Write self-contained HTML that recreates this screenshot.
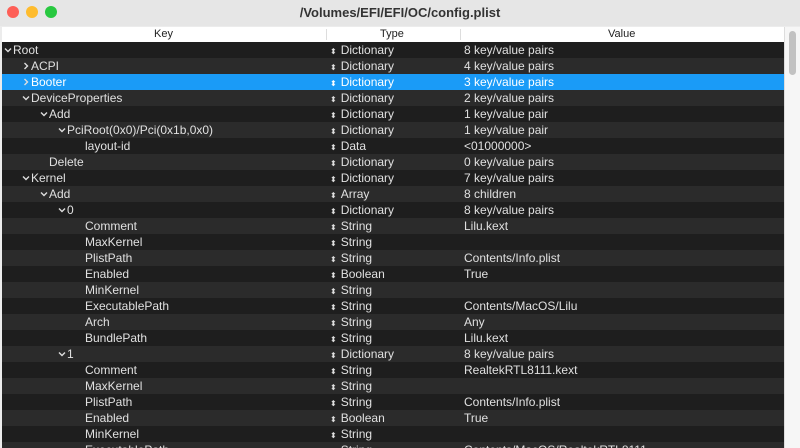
<!DOCTYPE html>
<html><head><style>
html,body{margin:0;width:800px;height:448px;overflow:hidden}
body{background:#ececec;font-family:"Liberation Sans",sans-serif;font-size:12px;position:relative}
.tb{position:absolute;left:0;top:0;width:800px;height:26px;background:#e6e6e6;text-align:center;line-height:25px;font-weight:bold;font-size:13px;color:#333}
.dot{position:absolute;top:6px;width:12px;height:12px;border-radius:50%}
.hdr{position:absolute;left:2px;top:27px;width:782px;height:15px;background:#fff;border-bottom:1px solid #ccc;font-size:11px;color:#222;line-height:15px}
.hdr span{position:absolute;top:0}
.sep{position:absolute;top:2px;width:1px;height:11px;background:#ddd}
.rows{position:absolute;left:2px;top:42px;width:782px;height:406px;overflow:hidden}
.r{height:16px;line-height:16px;position:relative;color:#e0e0e0;white-space:nowrap}
.r:nth-child(odd){background:#1e1e1e}.r:nth-child(even){background:#2b2b2b}
.r.sel{background:#1a9bf7;color:#fff}
.k{position:absolute}
.ar{position:absolute;top:4px;width:8px;height:8px}
.t{position:absolute;left:328px}
.t:before{content:"⬍";font-size:8px;margin-right:4px}
.v{position:absolute;left:462px}
.sb{position:absolute;left:784px;top:27px;width:16px;height:421px;background:#f6f6f6;border-left:1px solid #ddd}
.th{position:absolute;left:4px;top:4px;width:7px;height:44px;border-radius:4px;background:#c2c2c2}
</style></head><body>
<svg width="0" height="0" style="position:absolute"><defs>
<symbol id="d" viewBox="0 0 8 8"><path d="M1 2.5L4 5.5L7 2.5" fill="none" stroke="#ddd" stroke-width="1.4"/></symbol>
<symbol id="c" viewBox="0 0 8 8"><path d="M2.5 1L5.5 4L2.5 7" fill="none" stroke="#ddd" stroke-width="1.4"/></symbol>
</defs></svg>
<div class="tb">/Volumes/EFI/EFI/OC/config.plist
<div class="dot" style="left:7px;background:#fe5f57"></div><div class="dot" style="left:26px;background:#febc2e"></div><div class="dot" style="left:45px;background:#28c840"></div></div>
<div class="hdr"><span style="left:152px">Key</span><div class="sep" style="left:324px"></div><span style="left:378px">Type</span><div class="sep" style="left:458px"></div><span style="left:606px">Value</span></div>
<div class="rows">
<div class="r"><svg class="ar" style="left:2px"><use href="#d"/></svg><span class="k" style="left:11px">Root</span><span class="t">Dictionary</span><span class="v">8 key/value pairs</span></div>
<div class="r"><svg class="ar" style="left:20px"><use href="#c"/></svg><span class="k" style="left:29px">ACPI</span><span class="t">Dictionary</span><span class="v">4 key/value pairs</span></div>
<div class="r sel"><svg class="ar" style="left:20px"><use href="#c"/></svg><span class="k" style="left:29px">Booter</span><span class="t">Dictionary</span><span class="v">3 key/value pairs</span></div>
<div class="r"><svg class="ar" style="left:20px"><use href="#d"/></svg><span class="k" style="left:29px">DeviceProperties</span><span class="t">Dictionary</span><span class="v">2 key/value pairs</span></div>
<div class="r"><svg class="ar" style="left:38px"><use href="#d"/></svg><span class="k" style="left:47px">Add</span><span class="t">Dictionary</span><span class="v">1 key/value pair</span></div>
<div class="r"><svg class="ar" style="left:56px"><use href="#d"/></svg><span class="k" style="left:65px">PciRoot(0x0)/Pci(0x1b,0x0)</span><span class="t">Dictionary</span><span class="v">1 key/value pair</span></div>
<div class="r"><span class="k" style="left:83px">layout-id</span><span class="t">Data</span><span class="v">&lt;01000000&gt;</span></div>
<div class="r"><span class="k" style="left:47px">Delete</span><span class="t">Dictionary</span><span class="v">0 key/value pairs</span></div>
<div class="r"><svg class="ar" style="left:20px"><use href="#d"/></svg><span class="k" style="left:29px">Kernel</span><span class="t">Dictionary</span><span class="v">7 key/value pairs</span></div>
<div class="r"><svg class="ar" style="left:38px"><use href="#d"/></svg><span class="k" style="left:47px">Add</span><span class="t">Array</span><span class="v">8 children</span></div>
<div class="r"><svg class="ar" style="left:56px"><use href="#d"/></svg><span class="k" style="left:65px">0</span><span class="t">Dictionary</span><span class="v">8 key/value pairs</span></div>
<div class="r"><span class="k" style="left:83px">Comment</span><span class="t">String</span><span class="v">Lilu.kext</span></div>
<div class="r"><span class="k" style="left:83px">MaxKernel</span><span class="t">String</span></div>
<div class="r"><span class="k" style="left:83px">PlistPath</span><span class="t">String</span><span class="v">Contents/Info.plist</span></div>
<div class="r"><span class="k" style="left:83px">Enabled</span><span class="t">Boolean</span><span class="v">True</span></div>
<div class="r"><span class="k" style="left:83px">MinKernel</span><span class="t">String</span></div>
<div class="r"><span class="k" style="left:83px">ExecutablePath</span><span class="t">String</span><span class="v">Contents/MacOS/Lilu</span></div>
<div class="r"><span class="k" style="left:83px">Arch</span><span class="t">String</span><span class="v">Any</span></div>
<div class="r"><span class="k" style="left:83px">BundlePath</span><span class="t">String</span><span class="v">Lilu.kext</span></div>
<div class="r"><svg class="ar" style="left:56px"><use href="#d"/></svg><span class="k" style="left:65px">1</span><span class="t">Dictionary</span><span class="v">8 key/value pairs</span></div>
<div class="r"><span class="k" style="left:83px">Comment</span><span class="t">String</span><span class="v">RealtekRTL8111.kext</span></div>
<div class="r"><span class="k" style="left:83px">MaxKernel</span><span class="t">String</span></div>
<div class="r"><span class="k" style="left:83px">PlistPath</span><span class="t">String</span><span class="v">Contents/Info.plist</span></div>
<div class="r"><span class="k" style="left:83px">Enabled</span><span class="t">Boolean</span><span class="v">True</span></div>
<div class="r"><span class="k" style="left:83px">MinKernel</span><span class="t">String</span></div>
<div class="r"><span class="k" style="left:83px">ExecutablePath</span><span class="t">String</span><span class="v">Contents/MacOS/RealtekRTL8111</span></div>
</div>
<div class="sb"><div class="th"></div></div>
</body></html>
